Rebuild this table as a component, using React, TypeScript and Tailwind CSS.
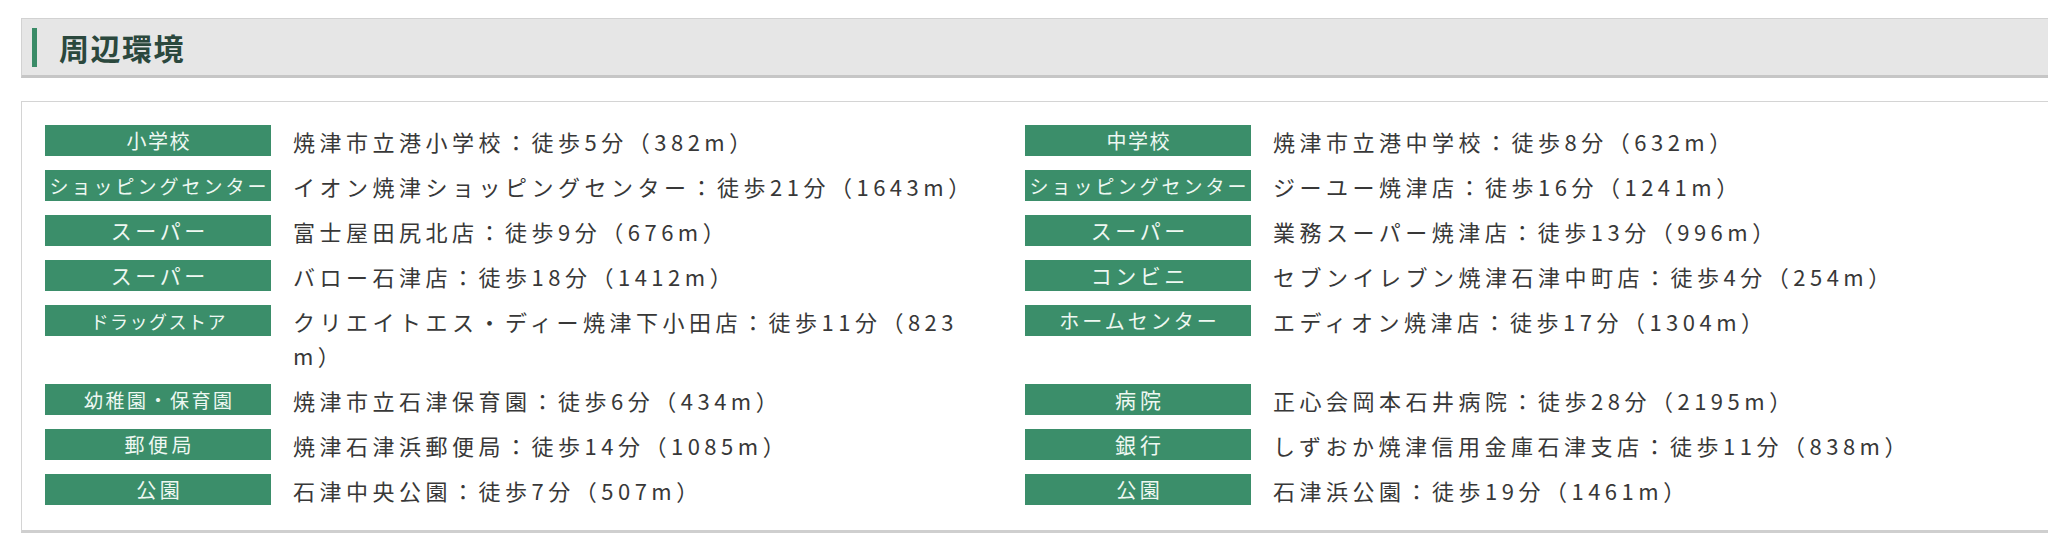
import React from 'react';

type Item = { label: string; text: string; lc: string };

const JP = "font-['Noto_Sans_CJK_JP','Noto_Sans',sans-serif]";

const rows: [Item, Item][] = [
  [
    { label: '小学校', text: '焼津市立港小学校：徒歩5分（382m）', lc: 'text-[20px] tracking-[1.5px] pl-[1.5px]' },
    { label: '中学校', text: '焼津市立港中学校：徒歩8分（632m）', lc: 'text-[20px] tracking-[1.5px] pl-[1.5px]' },
  ],
  [
    { label: 'ショッピングセンター', text: 'イオン焼津ショッピングセンター：徒歩21分（1643m）', lc: 'text-[19px] tracking-[3px] pl-[3px]' },
    { label: 'ショッピングセンター', text: 'ジーユー焼津店：徒歩16分（1241m）', lc: 'text-[19px] tracking-[3px] pl-[3px]' },
  ],
  [
    { label: 'スーパー', text: '富士屋田尻北店：徒歩9分（676m）', lc: 'text-[21px] tracking-[3.5px] pl-[3.5px]' },
    { label: 'スーパー', text: '業務スーパー焼津店：徒歩13分（996m）', lc: 'text-[21px] tracking-[3.5px] pl-[3.5px]' },
  ],
  [
    { label: 'スーパー', text: 'バロー石津店：徒歩18分（1412m）', lc: 'text-[21px] tracking-[3.5px] pl-[3.5px]' },
    { label: 'コンビニ', text: 'セブンイレブン焼津石津中町店：徒歩4分（254m）', lc: 'text-[21px] tracking-[3.5px] pl-[3.5px]' },
  ],
  [
    { label: 'ドラッグストア', text: 'クリエイトエス・ディー焼津下小田店：徒歩11分（823m）', lc: 'text-[18px] tracking-[1.5px] pl-[1.5px]' },
    { label: 'ホームセンター', text: 'エディオン焼津店：徒歩17分（1304m）', lc: 'text-[20px] tracking-[3px] pl-[3px]' },
  ],
  [
    { label: '幼稚園・保育園', text: '焼津市立石津保育園：徒歩6分（434m）', lc: 'text-[19px] tracking-[2.5px] pl-[2.5px]' },
    { label: '病院', text: '正心会岡本石井病院：徒歩28分（2195m）', lc: 'text-[21px] tracking-[4px] pl-[4px]' },
  ],
  [
    { label: '郵便局', text: '焼津石津浜郵便局：徒歩14分（1085m）', lc: 'text-[20px] tracking-[3.5px] pl-[3.5px]' },
    { label: '銀行', text: 'しずおか焼津信用金庫石津支店：徒歩11分（838m）', lc: 'text-[21px] tracking-[4px] pl-[4px]' },
  ],
  [
    { label: '公園', text: '石津中央公園：徒歩7分（507m）', lc: 'text-[20px] tracking-[3.5px] pl-[3.5px]' },
    { label: '公園', text: '石津浜公園：徒歩19分（1461m）', lc: 'text-[20px] tracking-[3.5px] pl-[3.5px]' },
  ],
];

function Label({ item }: { item: Item }) {
  return (
    <div className="pt-[7px] pb-[5px]">
      <div
        className={`h-[31px] bg-[#3b8e6a] text-[#eef8f2] flex items-center justify-center whitespace-nowrap overflow-hidden leading-none ${item.lc}`}
      >
        {item.label}
      </div>
    </div>
  );
}

function Text({ item }: { item: Item }) {
  return (
    <div className="pt-[6px] pb-[5px] pr-[20px] text-[22px] leading-[34px] tracking-[4.5px] text-[#383838] break-all">
      {item.text}
    </div>
  );
}

export default function App() {
  return (
    <div className={`w-[2048px] h-[537px] overflow-hidden bg-white ${JP}`}>
      <div className="ml-[21px] w-[2080px] pt-[18px]">
        {/* 見出し */}
        <div className="h-[60px] bg-[#e6e6e6] border-t border-l border-[#d2d2d2] border-b-[3px] border-b-[#c6c6c6] flex items-center">
          <div className="ml-[10px] w-[5px] h-[39px] bg-[#3a8b67]" />
          <h2 className="ml-[22px] text-[30px] font-bold text-[#2b483d] leading-none tracking-[1.5px]">周辺環境</h2>
        </div>

        {/* 一覧 */}
        <div className="mt-[23px] border-t border-l border-[#d4d4d4] border-b-[3px] border-b-[#cfcfcf] pl-[23px] pt-[16px] pb-[18px]">
          <div className="grid grid-cols-[226px_710px_226px_1fr] gap-x-[22px]">
            {rows.map(([a, b], i) => (
              <React.Fragment key={i}>
                <Label item={a} />
                <Text item={a} />
                <Label item={b} />
                <Text item={b} />
              </React.Fragment>
            ))}
          </div>
        </div>
      </div>
    </div>
  );
}
